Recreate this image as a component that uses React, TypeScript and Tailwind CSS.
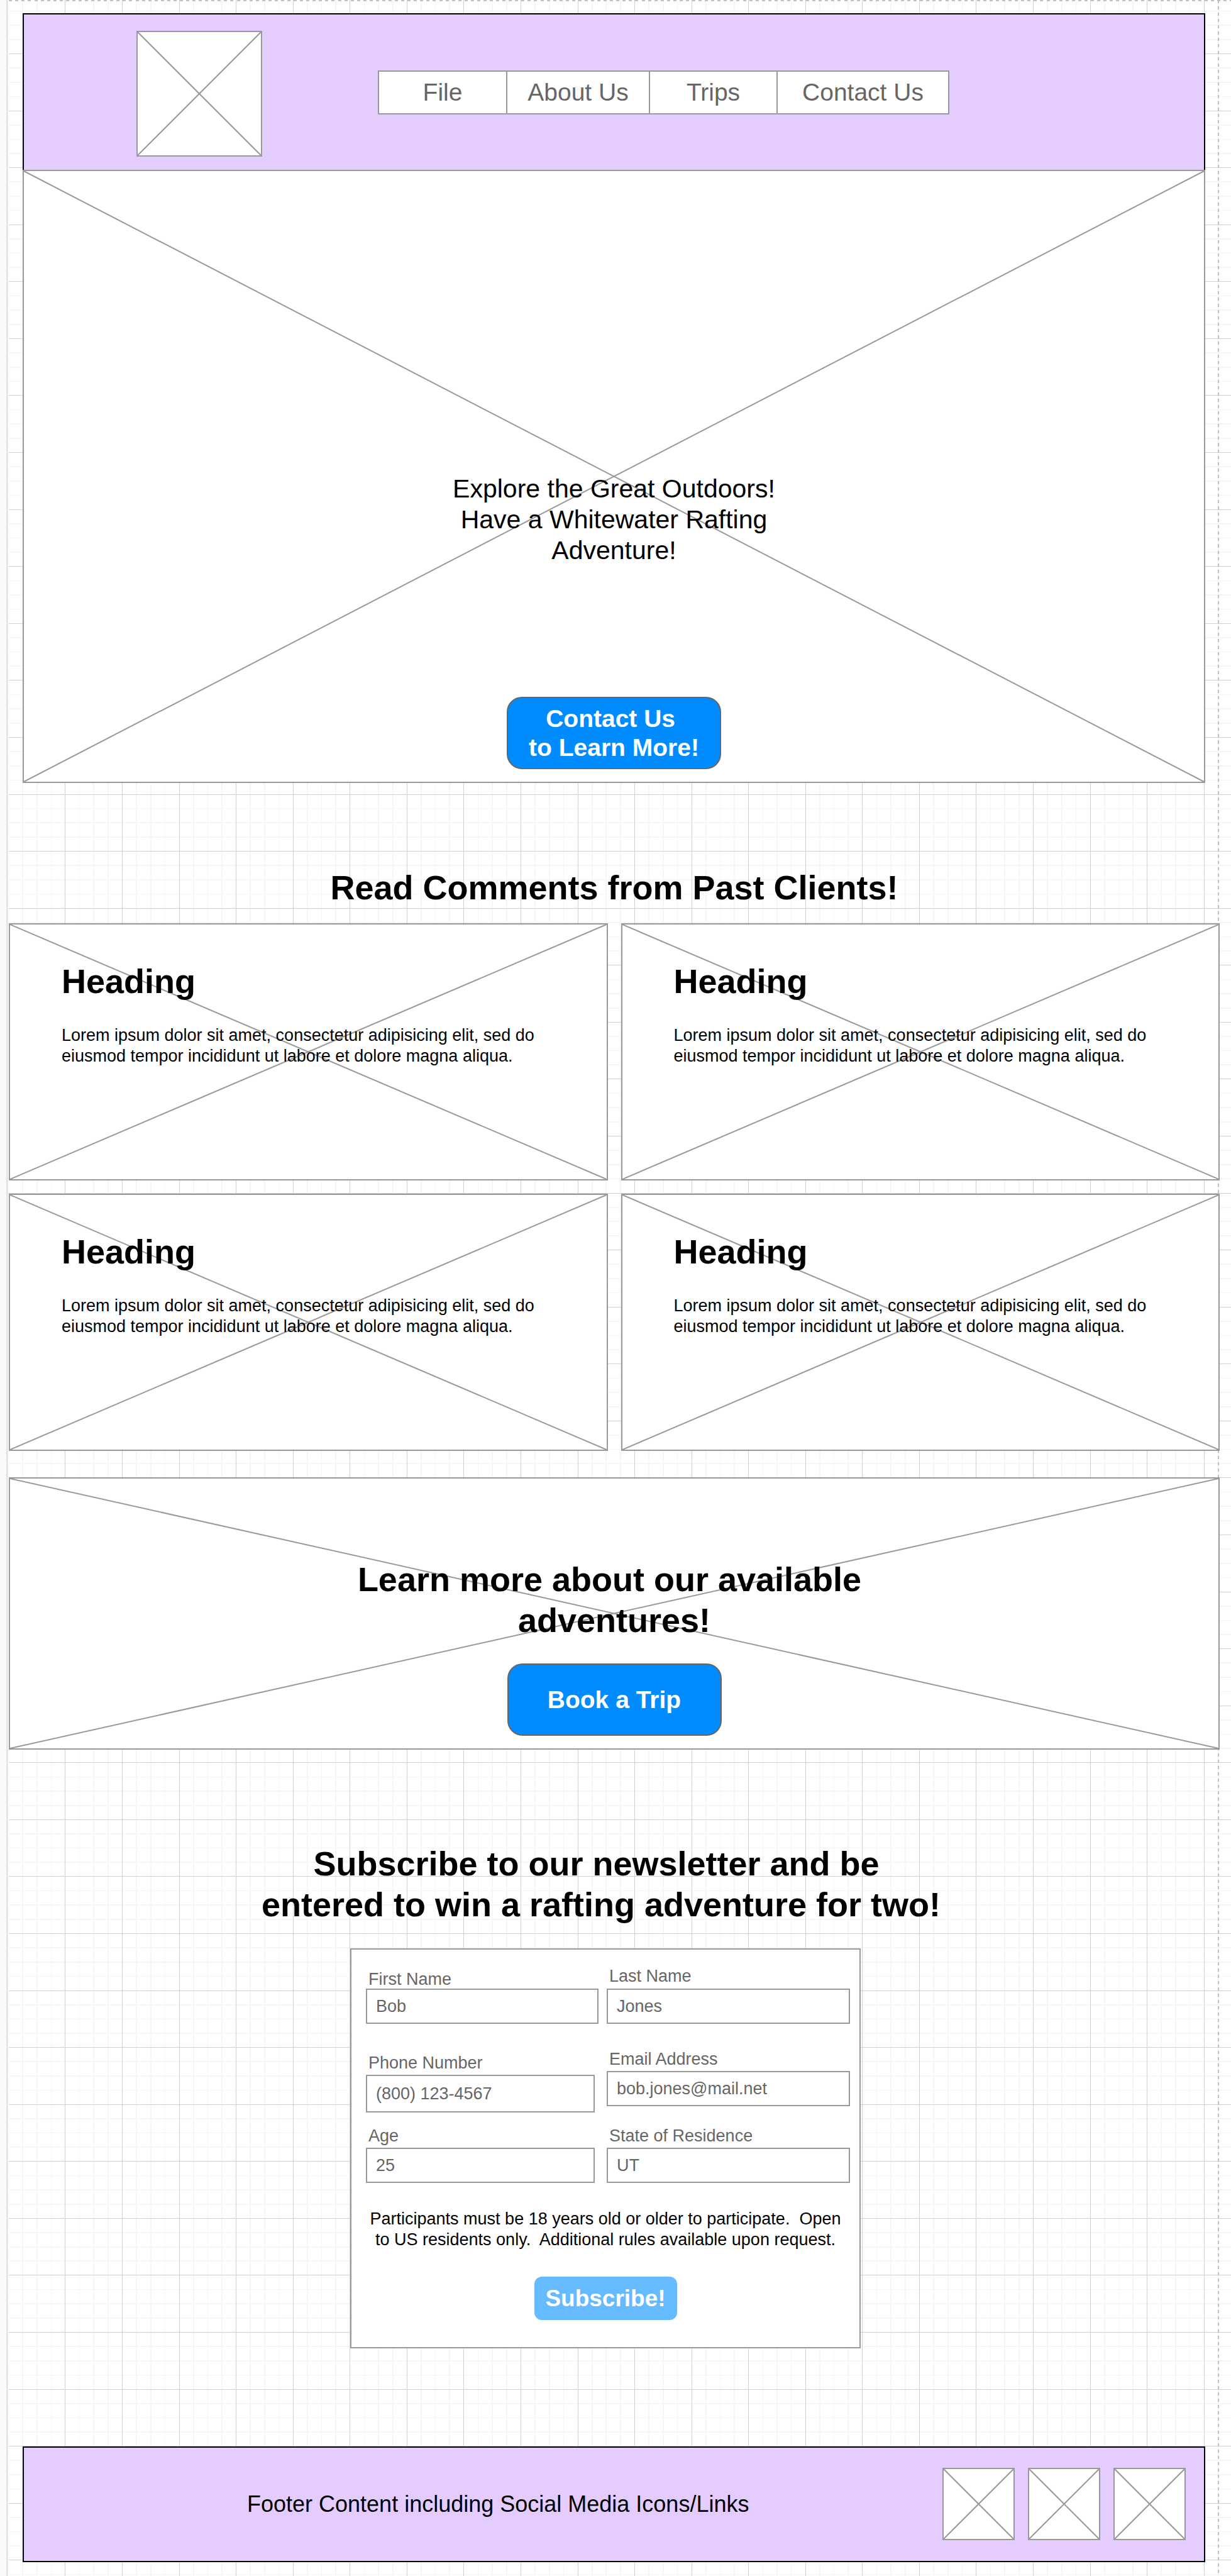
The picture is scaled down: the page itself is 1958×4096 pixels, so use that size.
import type { ReactNode } from "react";

const SHEET_W = 2335;
const SHEET_H = 4884;
const MINOR = 27;
const ORIGIN_X = 16;
const ORIGIN_Y = 102 - 108;

function gridPath(major: boolean) {
  const parts: string[] = [];
  for (let i = 0; ORIGIN_X + i * MINOR < SHEET_W; i++) {
    const x = ORIGIN_X + i * MINOR;
    if ((i % 4 === 0) === major && x > 18) parts.push(`M${x} 0V${SHEET_H}`);
  }
  for (let i = 0; ORIGIN_Y + i * MINOR < SHEET_H; i++) {
    const y = ORIGIN_Y + i * MINOR;
    if ((i % 4 === 0) === major && y > 0) parts.push(`M17 ${y}H${SHEET_W}`);
  }
  return parts.join("");
}

/* Graph paper with a page edge on the left and dashed page breaks. */
function GraphPaper() {
  return (
    <svg
      className="absolute inset-0 h-full w-full"
      viewBox={`0 0 ${SHEET_W} ${SHEET_H}`}
      preserveAspectRatio="none"
      aria-hidden="true"
    >
      <rect x="0" y="0" width="14" height={SHEET_H} fill="#fafafa" />
      <rect x="12" y="0" width="3" height={SHEET_H} fill="#e2e2e2" />
      <g fill="none" shapeRendering="crispEdges">
        <path d={gridPath(false)} stroke="#f6f6f6" strokeWidth="2" />
        <path d={gridPath(true)} stroke="#d0d0d0" strokeWidth="1" vectorEffect="non-scaling-stroke" />
        <path d={`M2311 0V${SHEET_H}`} stroke="#c0c0c0" strokeWidth="2" strokeDasharray="6 6" />
        <path d={`M17 1H${SHEET_W}`} stroke="#c0c0c0" strokeWidth="2" strokeDasharray="6 6" />
      </g>
    </svg>
  );
}

function Cross() {
  return (
    <svg className="absolute inset-0 h-full w-full" aria-hidden="true">
      <line x1="0" y1="0" x2="100%" y2="100%" stroke="#999999" strokeWidth="2" />
      <line x1="100%" y1="0" x2="0" y2="100%" stroke="#999999" strokeWidth="2" />
    </svg>
  );
}

function Placeholder({ className, children }: { className: string; children?: ReactNode }) {
  return (
    <div className={`relative border-2 border-[#999999] bg-white ${className}`}>
      <Cross />
      {children}
    </div>
  );
}

const navItems = [
  { label: "File", cell: "w-[204px] border-r-2" },
  { label: "About Us", cell: "w-[227px] border-r-2" },
  { label: "Trips", cell: "w-[203px] border-r-2" },
  { label: "Contact Us", cell: "w-[271px]" },
];

const comments = [0, 1, 2, 3];

const actionButton =
  "flex h-[115px] w-[341px] items-center justify-center rounded-[24px] border-2 border-[#666666] bg-[#008cff] text-center text-[39px] leading-[46px] font-bold text-white";

function Field({
  id,
  label,
  value,
  type = "text",
  className = "",
  inputClass = "mt-[4px] h-[56px]",
}: {
  id: string;
  label: string;
  value: string;
  type?: string;
  className?: string;
  inputClass?: string;
}) {
  return (
    <div className={`flex flex-col ${className}`}>
      <label htmlFor={id} className="pl-1 text-[27px] leading-[30px]">
        {label}
      </label>
      <input
        id={id}
        type={type}
        defaultValue={value}
        className={`w-full border-2 border-[#999999] bg-white px-[14px] text-[27px] text-[#666666] outline-none ${inputClass}`}
      />
    </div>
  );
}

export default function App() {
  return (
    <div className="relative min-h-screen bg-white pt-[21px] pb-[22px] font-['Liberation_Sans',Arial,sans-serif] text-black">
      <GraphPaper />

      <div className="relative">
        <header className="mr-[41px] ml-[36px] flex items-center border-x-2 border-t-2 border-black bg-[#e4ccff] pt-[26px] pb-[21px] pl-[179px]">
          <Placeholder className="h-[200px] w-[200px] shrink-0" />
          <nav className="mb-1 ml-[184px] border-2 border-[#999999] bg-white">
            <ul className="flex">
              {navItems.map((item) => (
                <li key={item.label} className={`border-[#999999] ${item.cell}`}>
                  <a
                    href="#"
                    className="flex h-[66px] items-center justify-center text-[39px] leading-[46px] whitespace-nowrap text-[#666666]"
                  >
                    {item.label}
                  </a>
                </li>
              ))}
            </ul>
          </nav>
        </header>

        <main>
          <Placeholder className="mr-[41px] ml-[36px] pt-[481px] pb-[20px]">
            <div className="relative flex flex-col items-center">
              <h1 className="text-center text-[41px] leading-[49px]">
                Explore the Great Outdoors!
                <br />
                Have a Whitewater Rafting
                <br />
                Adventure!
              </h1>
              <button type="button" className={`mt-[208px] ${actionButton}`}>
                <span>
                  Contact Us&nbsp;
                  <br />
                  to Learn More!
                </span>
              </button>
            </div>
          </Placeholder>

          <div className="mr-[18px] ml-[14px]">
            <h2 className="mt-[134px] text-center text-[54px] leading-[65px] font-bold">
              Read Comments from Past Clients!
            </h2>

            <div className="mt-[24px] grid grid-cols-2 gap-[21px]">
              {comments.map((n) => (
                <Placeholder key={n} className="px-[82px] pt-[58px] pb-[179px]">
                  <div className="relative">
                    <h3 className="text-[54px] leading-[65px] font-bold">Heading</h3>
                    <p className="mt-[37px] text-[27px] leading-[33px]">
                      Lorem ipsum dolor sit amet, consectetur adipisicing elit, sed do
                      <br />
                      eiusmod tempor incididunt ut labore et dolore magna aliqua.
                    </p>
                  </div>
                </Placeholder>
              ))}
            </div>

            <Placeholder className="mt-[42px] pt-[128px] pb-[20px]">
              <div className="relative flex flex-col items-center">
                <h2 className="text-center text-[54px] leading-[65px] font-bold">
                  Learn more about our available&nbsp;
                  <br />
                  adventures!
                </h2>
                <button type="button" className={`mt-[36px] ${actionButton}`}>
                  Book a Trip
                </button>
              </div>
            </Placeholder>

            <section className="mt-[149px] flex flex-col items-center">
              <h2 className="pr-[42px] text-center text-[54px] leading-[65px] font-bold">
                Subscribe to our newsletter and be&nbsp;
                <br />
                entered to win a rafting adventure for two!
              </h2>
              <form
                className="mt-[37px] mr-[28px] flex w-[812px] flex-col items-center border-2 border-[#999999] bg-white px-[15px] pt-[27px] pb-[43px] text-[#666666]"
                onSubmit={(e) => e.preventDefault()}
              >
                <div className="flex w-full gap-[13px] pl-2">
                  <div className="flex w-[370px] flex-col pt-[5px]">
                    <Field id="first-name" label="First Name" value="Bob" inputClass="h-[56px]" />
                    <Field
                      id="phone"
                      label="Phone Number"
                      value="(800) 123-4567"
                      type="tel"
                      className="mt-[47px] pr-[6px]"
                      inputClass="mt-[4px] h-[60px]"
                    />
                    <Field id="age" label="Age" value="25" className="mt-[22px] pr-[6px]" />
                  </div>
                  <div className="flex flex-1 flex-col">
                    <Field id="last-name" label="Last Name" value="Jones" inputClass="mt-[5px] h-[56px]" />
                    <Field
                      id="email"
                      label="Email Address"
                      value="bob.jones@mail.net"
                      type="email"
                      className="mt-[41px]"
                    />
                    <Field id="state" label="State of Residence" value="UT" className="mt-[32px]" />
                  </div>
                </div>
                <p className="mt-[41px] text-center text-[27px] leading-[33px] whitespace-nowrap text-black">
                  Participants must be 18 years old or older to participate.&nbsp; Open
                  <br />
                  to US residents only.&nbsp; Additional rules available upon request.
                </p>
                <button
                  type="submit"
                  className="mt-[42px] h-[69px] w-[227px] rounded-[12px] bg-[#66baff] text-[37px] font-bold text-white"
                >
                  Subscribe!
                </button>
              </form>
            </section>
          </div>
        </main>

        <footer className="mt-[156px] mr-[41px] ml-[36px] flex items-center justify-between border-2 border-black bg-[#e4ccff] pt-[32px] pr-[29px] pb-[33px] pl-[355px]">
          <p className="text-[36px] leading-[44px]">Footer Content including Social Media Icons/Links</p>
          <div className="flex gap-[21px]">
            <a href="#" aria-label="Social link 1">
              <Placeholder className="h-[115px] w-[115px]" />
            </a>
            <a href="#" aria-label="Social link 2">
              <Placeholder className="h-[115px] w-[115px]" />
            </a>
            <a href="#" aria-label="Social link 3">
              <Placeholder className="h-[115px] w-[115px]" />
            </a>
          </div>
        </footer>
      </div>
    </div>
  );
}
